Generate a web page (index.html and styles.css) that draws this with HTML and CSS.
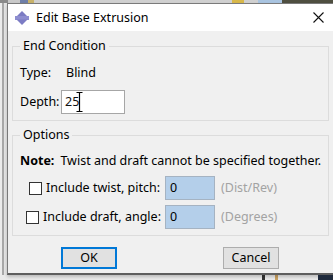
FILE: index.html
```html
<!DOCTYPE html>
<html lang="en">
<head>
<meta charset="UTF-8">
<meta name="viewport" content="width=device-width, initial-scale=1.0">
<title>Edit Base Extrusion</title>
<link rel="stylesheet" href="styles.css">
</head>
<body>
<div class="topbar"></div>
<div class="middle">
    <div class="leftstrip"></div>
    <div class="dialog">
        <div class="titlebar">
            <div class="title">
                <svg class="app-icon" width="14" height="14" viewBox="0 0 14 14">
                    <polygon points="7,0 12.5,5.5 1.5,5.5" fill="#7c7cc4"/>
                    <rect x="0" y="5" width="14" height="4" fill="#8e8ed0"/>
                    <polygon points="1.5,8.5 12.5,8.5 7,14" fill="#7c7cc4"/>
                </svg>
                <span>Edit Base Extrusion</span>
            </div>
            <div class="close">
                <svg width="11" height="11" viewBox="0 0 11 11">
                    <path d="M0.5 0.5 L10.5 10.5 M10.5 0.5 L0.5 10.5" stroke="#111" stroke-width="1.1"/>
                </svg>
            </div>
        </div>

        <div class="content">
            <fieldset class="group">
                <legend>End Condition</legend>
                <div class="row type-row">
                    <span class="type-label">Type:</span>
                    <span>Blind</span>
                </div>
                <div class="row depth-row">
                    <span class="depth-label">Depth:</span>
                    <div class="depth-input">
                        <span>25</span>
                        <svg class="ibeam" width="7" height="20" viewBox="0 0 7 20">
                            <path d="M0.5 0.5 H6.5 M3.5 0.5 V19.5 M0.5 19.5 H6.5" stroke="#000" stroke-width="1.2" fill="none"/>
                        </svg>
                    </div>
                </div>
            </fieldset>

            <fieldset class="group options">
                <legend>Options</legend>
                <div class="row note-row">
                    <b>Note:</b><span class="note-text">Twist and draft cannot be specified together.</span>
                </div>
                <div class="row check-row twist">
                    <span class="checkbox"></span>
                    <span class="check-label">Include twist, pitch:</span>
                    <div class="num-input">0</div>
                    <span class="unit">(Dist/Rev)</span>
                </div>
                <div class="row check-row draft">
                    <span class="checkbox"></span>
                    <span class="check-label">Include draft, angle:</span>
                    <div class="num-input">0</div>
                    <span class="unit">(Degrees)</span>
                </div>
            </fieldset>

            <div class="buttons">
                <div class="btn btn-default">OK</div>
                <div class="btn">Cancel</div>
            </div>
        </div>
    </div>
</div>
<div class="bottombar">
    <div class="taskbar-dark"></div>
</div>
</body>
</html>
```

FILE: styles.css
```css
body {
    margin: 0;
    padding: 0;
    width: 333px;
    height: 280px;
    overflow: hidden;
    background: #e4e4e4;
    font-family: "Noto Sans", "Open Sans", sans-serif;
    font-size: 12.5px;
    line-height: 16px;
    color: #000;
}

.topbar {
    height: 3px;
    background: linear-gradient(to right,
        #8a8a8a 0, #8a8a8a 8px,
        #c9c9c9 8px, #c9c9c9 20px,
        #6f7fa8 20px, #6f7fa8 28px,
        #c8b26a 28px, #c8b26a 34px,
        #d0d0d0 34px, #d0d0d0 232px,
        #d8b84a 232px, #d8b84a 244px,
        #d0d0d0 244px, #d0d0d0 258px,
        #a9c4e0 258px, #a9c4e0 282px,
        #4f4f40 282px, #4f4f40 100%);
}

.middle {
    display: flex;
    height: 272px;
}

.leftstrip {
    width: 2px;
    flex: none;
    background: #ececec;
    border-right: 2px solid #a8a8a8;
    margin-right: 3px;
}

.dialog {
    width: 334px;
    flex: none;
    box-sizing: border-box;
    height: 272px;
    background: #f0f0f0;
    border: 1px solid #7a7a7a;
    border-bottom: 2px solid #5e5e5e;
    box-shadow: 0 2px 3px rgba(0, 0, 0, 0.2);
    display: flex;
    flex-direction: column;
}

.titlebar {
    height: 27px;
    background: #fff;
    display: flex;
    align-items: center;
    justify-content: space-between;
}

.title {
    display: flex;
    align-items: center;
    padding-left: 7px;
    gap: 7px;
}

.app-icon {
    display: block;
    margin-top: 1px;
}

.close {
    width: 46px;
    height: 27px;
    display: flex;
    align-items: center;
    justify-content: center;
    margin-right: -1px;
}

.close svg {
    display: block;
}

.content {
    padding: 0 4px;
}

.group {
    margin: 7px 0 0 0;
    width: 317px;
    box-sizing: border-box;
    border: 1px solid #dcdcdc;
    padding: 0 7px 6px 7px;
    min-width: 0;
}

.group legend {
    padding: 0 3px;
    line-height: 16px;
}

.options {
    margin-top: 6px;
}

.row {
    display: flex;
    align-items: center;
    white-space: nowrap;
}

.type-row {
    margin-top: 11px;
    height: 16px;
}

.type-label {
    width: 46px;
}

.depth-row {
    margin-top: 9px;
    height: 24px;
}

.depth-label {
    width: 41px;
}

.depth-input {
    position: relative;
    width: 64px;
    height: 24px;
    box-sizing: border-box;
    border: 1px solid #a6a6a6;
    background: #fff;
    padding-left: 3px;
    display: flex;
    align-items: center;
    color: #111;
}

.ibeam {
    position: absolute;
    left: 14px;
    top: 1px;
}

.note-row {
    margin-top: 10px;
    height: 16px;
}

.note-text {
    margin-left: 6px;
    flex: none;
}

.check-row {
    height: 24px;
}

.twist {
    margin-top: 7px;
    padding-left: 9px;
}

.draft {
    margin-top: 5px;
    padding-left: 6px;
}

.checkbox {
    width: 13px;
    height: 13px;
    box-sizing: border-box;
    border: 1px solid #333;
    background: #fff;
    flex: none;
}

.check-label {
    margin-left: 4px;
    flex: none;
}

.twist .check-label {
    width: 119px;
}

.draft .check-label {
    width: 122px;
}

.num-input {
    width: 50px;
    height: 24px;
    box-sizing: border-box;
    background: #b4cfea;
    border: 1px solid #a5b3c2;
    padding-left: 4px;
    display: flex;
    align-items: center;
}

.unit {
    margin-left: 6px;
    color: #a3a3a3;
}

.buttons {
    display: flex;
    margin-top: 11px;
    padding-left: 49px;
    gap: 106px;
}

.btn {
    width: 56px;
    height: 22px;
    box-sizing: border-box;
    background: #e1e1e1;
    border: 1px solid #adadad;
    display: flex;
    align-items: center;
    justify-content: center;
}

.btn-default {
    border: 2px solid #0078d7;
}

.bottombar {
    height: 5px;
    display: flex;
    justify-content: flex-end;
    background: linear-gradient(to right,
        #eaeaea 0, #eaeaea 262px,
        #333 262px, #333 265px,
        #eaeaea 265px, #eaeaea 275px,
        #c9a060 275px, #c9a060 278px,
        #eaeaea 278px, #eaeaea 100%);
}

.taskbar-dark {
    width: 15px;
    background: #1f2a3c;
}
```
